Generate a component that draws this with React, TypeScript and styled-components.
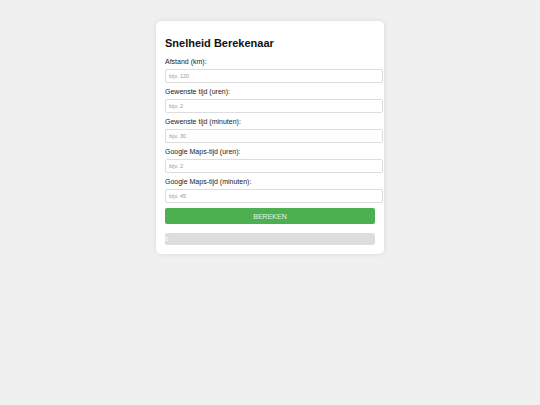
import * as React from "react"
import styled, { createGlobalStyle } from "styled-components"

const GlobalStyle = createGlobalStyle`
  html, body {
    margin: 0;
    padding: 0;
    background: #f0f0f0;
    font-family: "Liberation Sans", Arial, sans-serif;
  }
`

const Page = styled.div`
  display: flex;
  justify-content: center;
  align-items: flex-start;
  padding-top: 21px;
  min-height: 405px;
  box-sizing: border-box;
`

const Card = styled.div`
  width: 228px;
  box-sizing: border-box;
  background: #fff;
  border-radius: 5px;
  box-shadow: 0 0 5px rgba(0, 0, 0, 0.1);
  padding: 16px 9px 9px;
`

const Title = styled.h2`
  margin: 0 0 8px;
  font-size: 11px;
  line-height: 13px;
  font-weight: bold;
  color: #111;
`

const Field = styled.div`
  display: flex;
  flex-direction: column;
  margin-bottom: 5px;
`

const Label = styled.label`
  font-size: 7px;
  line-height: 8px;
  color: #222;
  margin-bottom: 3px;
`

const Input = styled.input`
  box-sizing: border-box;
  width: calc(100% + 8px);
  height: 14px;
  padding: 0 3px;
  border: 1px solid #ddd;
  border-radius: 2px;
  font-family: inherit;
  font-size: 5.5px;
  color: #333;
  outline: none;
  &::placeholder {
    color: #999;
  }
`

const Button = styled.button`
  display: block;
  width: 100%;
  height: 16px;
  margin-top: 1px;
  border: none;
  border-radius: 2px;
  background: #4caf50;
  color: #e8f5e9;
  font-family: inherit;
  font-size: 7px;
  padding: 0;
  cursor: pointer;
`

const Progress = styled.div`
  margin-top: 9px;
  height: 12px;
  border-radius: 2px;
  background: #ddd;
`

const ProgressFill = styled.div`
  height: 100%;
  background: #4caf50;
  color: #fff;
  font-size: 6px;
  line-height: 12px;
  white-space: nowrap;
`

const fields = [
  { label: "Afstand (km):", placeholder: "bijv. 120" },
  { label: "Gewenste tijd (uren):", placeholder: "bijv. 2" },
  { label: "Gewenste tijd (minuten):", placeholder: "bijv. 30" },
  { label: "Google Maps-tijd (uren):", placeholder: "bijv. 2" },
  { label: "Google Maps-tijd (minuten):", placeholder: "bijv. 45" },
]

export default function App() {
  const [progress] = React.useState(0)
  return (
    <>
      <GlobalStyle />
      <Page>
        <Card>
          <Title>Snelheid Berekenaar</Title>
          {fields.map(f => (
            <Field key={f.label}>
              <Label>{f.label}</Label>
              <Input type="number" placeholder={f.placeholder} />
            </Field>
          ))}
          <Button>BEREKEN</Button>
          <Progress>
            <ProgressFill style={{ width: `${progress}%` }}>{progress}</ProgressFill>
          </Progress>
        </Card>
      </Page>
    </>
  )
}
